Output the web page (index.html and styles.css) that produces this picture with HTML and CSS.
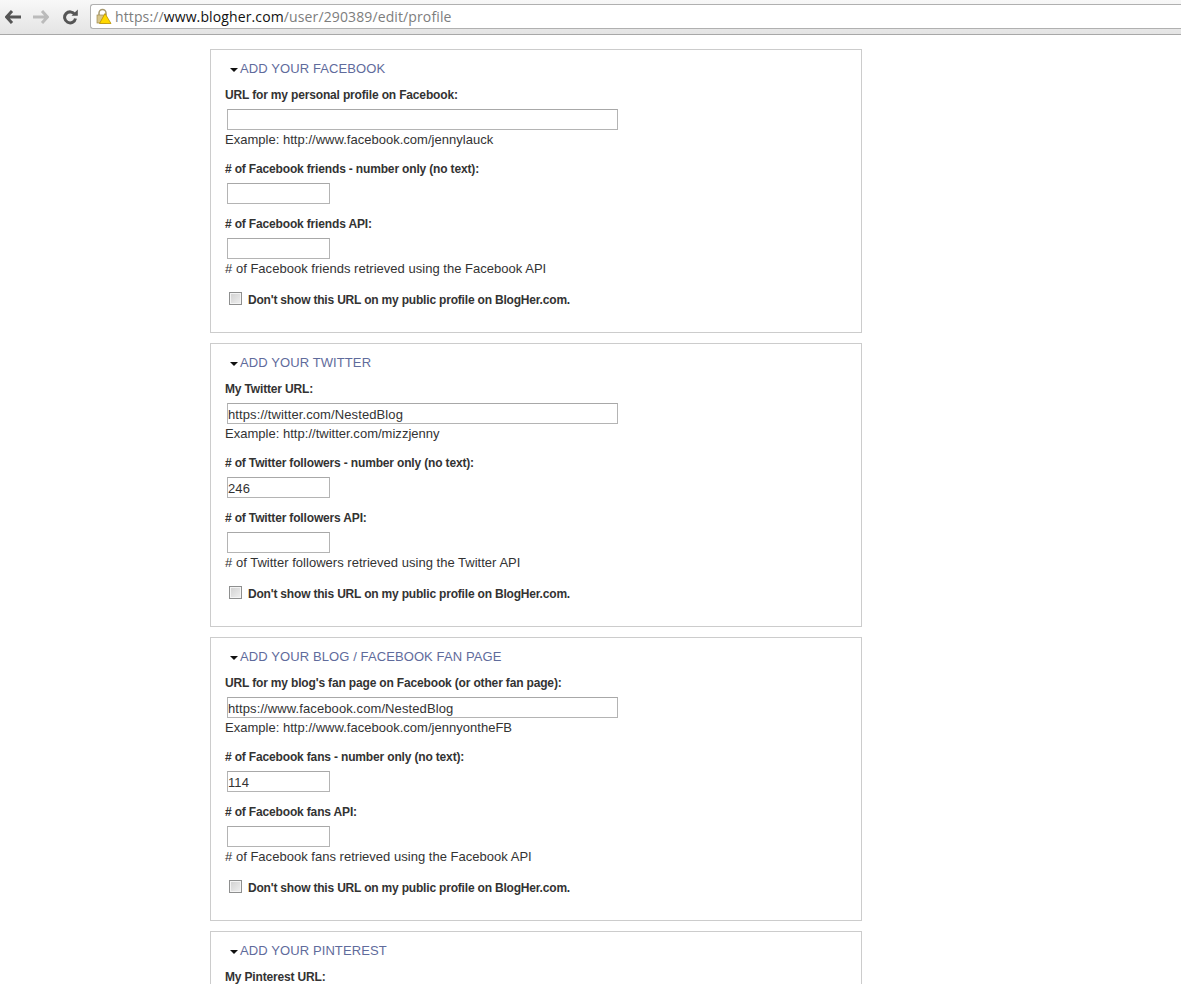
FILE: index.html
```html
<!DOCTYPE html>
<html lang="en">
<head>
<meta charset="utf-8">
<title>Edit profile</title>
<link rel="stylesheet" href="styles.css">
</head>
<body>
<header class="toolbar">
  <svg class="nav" width="16" height="14" viewBox="0 0 16 14"><path d="M7 1 1.500 7 7 13M2 7h14" fill="none" stroke="#555" stroke-width="3"/></svg>
  <svg class="nav forward" width="16" height="14" viewBox="0 0 16 14"><path d="M9 1l5.500 6L9 13M14 7H0" fill="none" stroke="#bbb" stroke-width="3"/></svg>
  <svg class="nav reload" width="16" height="16" viewBox="0 0 16 16"><path d="M12.800 5.500A5.500 5.500 0 1 0 13.500 9.500" fill="none" stroke="#555" stroke-width="3"/><path d="M9.500 6.800H15.800V0.500z" fill="#555"/></svg>
  <div class="omnibox">
    <svg class="lock" width="16" height="17" viewBox="0 0 16 17"><path d="M3 8V5a3.500 3.500 0 0 1 7 0v2" fill="none" stroke="#a89a70" stroke-width="1.500"/><rect x="1" y="7" width="9" height="8" fill="#d8c68a" stroke="#a08a50" stroke-width=".7"/><path d="M9 5.500 15 15.500H3.500z" fill="#ffd800" stroke="#b89000" stroke-width=".8"/></svg>
    <span class="url">https://<b class="host">www.blogher.com</b>/user/290389/edit/profile</span>
  </div>
</header>
<main class="page">
  <section class="box">
    <h2 class="title"><i class="caret"></i>ADD YOUR FACEBOOK</h2>
    <label class="label">URL for my personal profile on Facebook:</label>
    <input class="field wide" type="text">
    <p class="hint">Example: http://www.facebook.com/jennylauck</p>
    <label class="label next">&#35; of Facebook friends - number only (no text):</label>
    <input class="field short" type="text">
    <label class="label next">&#35; of Facebook friends API:</label>
    <input class="field short" type="text">
    <p class="hint">&#35; of Facebook friends retrieved using the Facebook API</p>
    <div class="check"><input class="box-input" type="checkbox"><span class="check-text">Don't show this URL on my public profile on BlogHer.com.</span></div>
  </section>
  <section class="box">
    <h2 class="title"><i class="caret"></i>ADD YOUR TWITTER</h2>
    <label class="label">My Twitter URL:</label>
    <input class="field wide" type="text" value="https://twitter.com/NestedBlog">
    <p class="hint">Example: http://twitter.com/mizzjenny</p>
    <label class="label next">&#35; of Twitter followers - number only (no text):</label>
    <input class="field short" type="text" value="246">
    <label class="label next">&#35; of Twitter followers API:</label>
    <input class="field short" type="text">
    <p class="hint">&#35; of Twitter followers retrieved using the Twitter API</p>
    <div class="check"><input class="box-input" type="checkbox"><span class="check-text">Don't show this URL on my public profile on BlogHer.com.</span></div>
  </section>
  <section class="box">
    <h2 class="title"><i class="caret"></i>ADD YOUR BLOG / FACEBOOK FAN PAGE</h2>
    <label class="label">URL for my blog's fan page on Facebook (or other fan page):</label>
    <input class="field wide" type="text" value="https://www.facebook.com/NestedBlog">
    <p class="hint">Example: http://www.facebook.com/jennyontheFB</p>
    <label class="label next">&#35; of Facebook fans - number only (no text):</label>
    <input class="field short" type="text" value="114">
    <label class="label next">&#35; of Facebook fans API:</label>
    <input class="field short" type="text">
    <p class="hint">&#35; of Facebook fans retrieved using the Facebook API</p>
    <div class="check"><input class="box-input" type="checkbox"><span class="check-text">Don't show this URL on my public profile on BlogHer.com.</span></div>
  </section>
  <section class="box">
    <h2 class="title"><i class="caret"></i>ADD YOUR PINTEREST</h2>
    <label class="label">My Pinterest URL:</label>
  </section>
</main>
</body>
</html>
```
FILE: styles.css
```css
html, body { margin: 0; padding: 0; height: 984px; overflow: hidden; background: #fff; }
body { font-family: "Liberation Sans", Arial, sans-serif; color: #333; font-size: 12px; }
.toolbar { height: 35px; box-sizing: border-box; display: flex; align-items: center; background: linear-gradient(#f8f8f8, #e4e4e4); border-bottom: 1px solid #a8a8a8; padding: 0 0 0 5px; gap: 12px; }
.nav { flex: none; }
.forward { margin-right: 1px; }
.omnibox { flex: 1; height: 25px; margin-top: -2px; background: #fff; border: 1px solid #b0b0b0; border-right: 0; border-radius: 3px 0 0 3px; box-sizing: border-box; display: flex; align-items: center; padding-left: 5px; gap: 3px; }
.lock { flex: none; }
.url { font-family: "Open Sans", "Liberation Sans", sans-serif; font-size: 14px; letter-spacing: .12px; color: #7d7d7d; white-space: nowrap; }
.host { font-weight: 400; color: #111; }
.page { padding: 14px 0 0 210px; width: 652px; }
.box { border: 1px solid #ccc; height: 284px; box-sizing: border-box; margin-bottom: 10px; padding: 11px 14px 0; }
.title { margin: 0; font-size: 13px; letter-spacing: .1px; font-weight: 400; line-height: 16px; color: #5f6b9c; display: flex; align-items: center; padding-left: 5px; }
.caret { width: 0; height: 0; border: 4px solid transparent; border-top: 4px solid #111; border-bottom: 0; margin: 2px 2px 0 0; }
.label { display: block; font-weight: 700; font-size: 12px; letter-spacing: -.16px; line-height: 14px; margin-top: 11px; color: #333; }
.label.next { margin-top: 13px; }
.field { display: block; box-sizing: border-box; height: 21px; margin: 7px 0 0 2px; padding: 2px 0 0; border: 1px solid #b4b4b4; border-top-color: #a8a8a8; background: #fff; font: 13px "Liberation Sans", Arial, sans-serif; letter-spacing: .1px; color: #333; outline: 0; }
.wide { width: 391px; }
.short { width: 103px; }
.hint { margin: 1px 0 0; font-size: 13px; letter-spacing: .02px; line-height: 18px; color: #333; }
.check { display: flex; align-items: center; margin-top: 14px; padding-left: 4px; }
.box-input { appearance: none; box-sizing: border-box; width: 13px; height: 13px; margin: 0 6px 3px 0; border: 1px solid #8e8f8f; background: linear-gradient(135deg, #d0d0d0, #f0f0f0); box-shadow: inset 0 0 0 1px #f4f4f4; }
.check-text { font-weight: 700; font-size: 12px; letter-spacing: -.19px; line-height: 14px; }
```
